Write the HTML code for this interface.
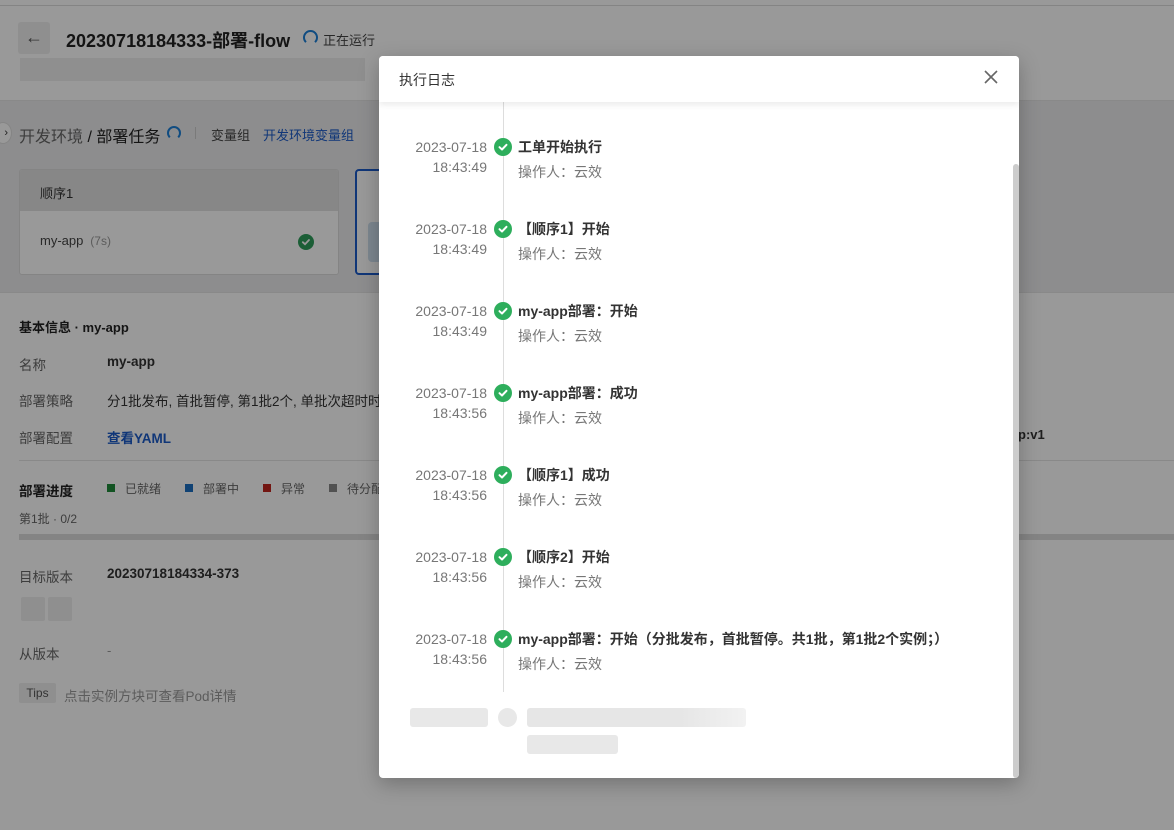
<!DOCTYPE html>
<html><head><meta charset="utf-8"><style>
*{box-sizing:border-box;margin:0;padding:0}
body{width:1174px;height:830px;position:relative;overflow:hidden;background:#fff;font-family:"Liberation Sans","Noto Sans CJK SC",sans-serif;color:#333}
.a{position:absolute;white-space:nowrap}
.ov{position:absolute;left:0;top:0;width:1174px;height:830px;background:rgba(0,0,0,.4)}
.modal{position:absolute;left:379px;top:56px;width:640px;height:722px;background:#fff;border-radius:4px;box-shadow:0 6px 20px rgba(0,0,0,.25);overflow:hidden}
.d{position:absolute;right:0;width:108px;text-align:right;font-size:14px;color:#777;line-height:20px}
.ck{position:absolute;left:115px;width:18px;height:18px;border-radius:50%;background:#2eae5c}
.t{position:absolute;left:139px;font-size:14px;font-weight:bold;color:#333;line-height:20px;white-space:nowrap}
.o{position:absolute;left:139px;font-size:14px;color:#777;line-height:20px}
.sk{position:absolute;background:#e8e8e8;border-radius:3px}
</style></head><body>
<div class="a" style="left:0;top:5px;width:1174px;height:1px;background:#ddd"></div>
<div class="a" style="left:18px;top:22px;width:32px;height:32px;background:#eee;border-radius:3px;font-size:18px;text-align:center;line-height:30px;color:#555">←</div>
<div class="a" style="left:66px;top:27px;font-size:18px;font-weight:bold;color:#222">20230718184333-部署-flow</div>
<div class="a" style="left:303px;top:30px;width:15px;height:15px;border:2.5px solid #1b7fd8;border-bottom-color:transparent;border-radius:50%"></div>
<div class="a" style="left:323px;top:30px;font-size:13px;color:#444">正在运行</div>
<div class="a" style="left:20px;top:58px;width:345px;height:23px;background:#eee"></div>
<div class="a" style="left:0;top:100px;width:1174px;height:193px;background:#ececed;border-top:1px solid #e5e5e5;border-bottom:1px solid #e5e5e5"></div>
<div class="a" style="left:-6px;top:122px;width:18px;height:22px;border-radius:50%;background:#fff;border:1px solid #ddd;font-size:11px;line-height:20px;text-align:right;padding-right:3px">›</div>
<div class="a" style="left:19px;top:123px;font-size:16px;color:#666">开发环境 <span style="color:#222">/ 部署任务</span></div>
<div class="a" style="left:167px;top:126px;width:14px;height:14px;border:2.5px solid #1b7fd8;border-bottom-color:transparent;border-radius:50%"></div>
<div class="a" style="left:195px;top:127px;width:1px;height:12px;background:#ccc"></div>
<div class="a" style="left:211px;top:125px;font-size:13px;color:#444">变量组</div>
<div class="a" style="left:263px;top:125px;font-size:13px;color:#1b5bc9">开发环境变量组</div>
<div class="a" style="left:19px;top:169px;width:320px;height:106px;background:#fff;border:1px solid #ddd;border-radius:3px;overflow:hidden">
<div style="height:41px;background:#e2e2e2;padding:13px 20px;font-size:13px;color:#333">顺序1</div>
<div style="padding:22px 20px;font-size:13px;color:#444">my-app <span style="color:#999;font-size:12px">&nbsp;(7s)</span></div>
<div style="position:absolute;left:278px;top:64px;width:16px;height:16px;border-radius:50%;background:#2e9d5b"><svg width="16" height="16"><path d="M4.8 8.2L7 10.2L11 6" stroke="#fff" stroke-width="1.8" fill="none" stroke-linecap="round"/></svg></div></div>
<div class="a" style="left:355px;top:169px;width:40px;height:106px;background:#fff;border:2px solid #1b5bc9;border-radius:4px"></div>
<div class="a" style="left:368px;top:222px;width:20px;height:40px;background:#cfe0ef;border-radius:4px"></div>
<div class="a" style="left:19px;top:317px;font-size:13px;font-weight:bold;color:#222">基本信息 · my-app</div>
<div class="a" style="left:19px;top:354px;font-size:13.5px;color:#666">名称</div>
<div class="a" style="left:107px;top:354px;font-size:13.5px;font-weight:bold;color:#333">my-app</div>
<div class="a" style="left:19px;top:390px;font-size:13.5px;color:#666">部署策略</div>
<div class="a" style="left:107px;top:390px;font-size:13.5px;color:#333">分1批发布, 首批暂停, 第1批2个, 单批次超时时</div>
<div class="a" style="left:19px;top:427px;font-size:13.5px;color:#666">部署配置</div>
<div class="a" style="left:107px;top:427px;font-size:13.5px;font-weight:bold;color:#1b5bc9">查看YAML</div>
<div class="a" style="left:1018px;top:427px;font-size:13px;font-weight:bold;color:#333">p:v1</div>
<div class="a" style="left:19px;top:460px;width:1155px;height:1px;background:#e5e5e5"></div>
<div class="a" style="left:19px;top:480px;font-size:13.5px;font-weight:bold;color:#222">部署进度</div>
<div class="a" style="left:107px;top:484px;width:8px;height:8px;background:#1f8a3a"></div><div class="a" style="left:125px;top:480px;font-size:12px;color:#666">已就绪</div>
<div class="a" style="left:185px;top:484px;width:8px;height:8px;background:#1b6ec2"></div><div class="a" style="left:203px;top:480px;font-size:12px;color:#666">部署中</div>
<div class="a" style="left:263px;top:484px;width:8px;height:8px;background:#c0251f"></div><div class="a" style="left:281px;top:480px;font-size:12px;color:#666">异常</div>
<div class="a" style="left:329px;top:484px;width:8px;height:8px;background:#888"></div><div class="a" style="left:347px;top:480px;font-size:12px;color:#666">待分配</div>
<div class="a" style="left:19px;top:510px;font-size:12px;color:#666">第1批 · 0/2</div>
<div class="a" style="left:19px;top:534px;width:1155px;height:6px;background:#ddd"></div>
<div class="a" style="left:19px;top:566px;font-size:13.5px;color:#666">目标版本</div>
<div class="a" style="left:107px;top:566px;font-size:13.5px;font-weight:bold;color:#333">20230718184334-373</div>
<div class="a" style="left:21px;top:597px;width:24px;height:24px;background:#eee;border-radius:2px"></div>
<div class="a" style="left:48px;top:597px;width:24px;height:24px;background:#eee;border-radius:2px"></div>
<div class="a" style="left:19px;top:643px;font-size:13.5px;color:#666">从版本</div>
<div class="a" style="left:107px;top:643px;font-size:13px;color:#999">-</div>
<div class="a" style="left:19px;top:683px;width:37px;height:20px;background:#eee;font-size:12px;color:#555;text-align:center;line-height:20px;border-radius:2px">Tips</div>
<div class="a" style="left:64px;top:685px;font-size:13.5px;color:#999">点击实例方块可查看Pod详情</div>
<div class="ov"></div>
<div class="modal">
<div style="position:absolute;left:0;top:0;width:640px;height:46px;box-shadow:0 3px 6px rgba(0,0,0,.08);z-index:2;background:#fff"></div>
<div class="a" style="left:20px;top:14px;font-size:14px;color:#333;z-index:3">执行日志</div>
<svg class="a" style="left:604px;top:13px;z-index:3" width="16" height="16"><path d="M2 2L14 14M14 2L2 14" stroke="#666" stroke-width="1.6"/></svg>
<div class="a" style="left:124px;top:46px;width:1px;height:590px;background:#ddd"></div>
<div class="a" style="left:634px;top:108px;width:6px;height:614px;background:#ccc;border-radius:3px"></div>
<script>
var items=[["工单开始执行","49"],["【顺序1】开始","49"],["my-app部署：开始","49"],["my-app部署：成功","56"],["【顺序1】成功","56"],["【顺序2】开始","56"],["my-app部署：开始（分批发布，首批暂停。共1批，第1批2个实例；）","56"]];
var h="";items.forEach(function(it,i){var y=81+i*82;
h+='<div class="d" style="left:0;top:'+y+'px;width:108px">2023-07-18<br>18:43:'+it[1]+'</div>';
h+='<div class="ck" style="top:'+(y+1)+'px"><svg width="18" height="18"><path d="M5.5 9.2L8 11.5L12.5 6.8" stroke="#fff" stroke-width="2" fill="none" stroke-linecap="round" stroke-linejoin="round"/></svg></div>';
h+='<div class="t" style="top:'+y+'px">'+it[0]+'</div><div class="o" style="top:'+(y+25)+'px">操作人：云效</div>';});
document.write(h);
</script>
<div class="sk" style="left:31px;top:652px;width:78px;height:19px"></div>
<div class="sk" style="left:119px;top:652px;width:19px;height:19px;border-radius:50%"></div>
<div class="sk" style="left:148px;top:652px;width:219px;height:19px;background:linear-gradient(90deg,#e6e6e6 70%,#f2f2f2)"></div>
<div class="sk" style="left:148px;top:679px;width:91px;height:19px"></div>
</div>
</body></html>
